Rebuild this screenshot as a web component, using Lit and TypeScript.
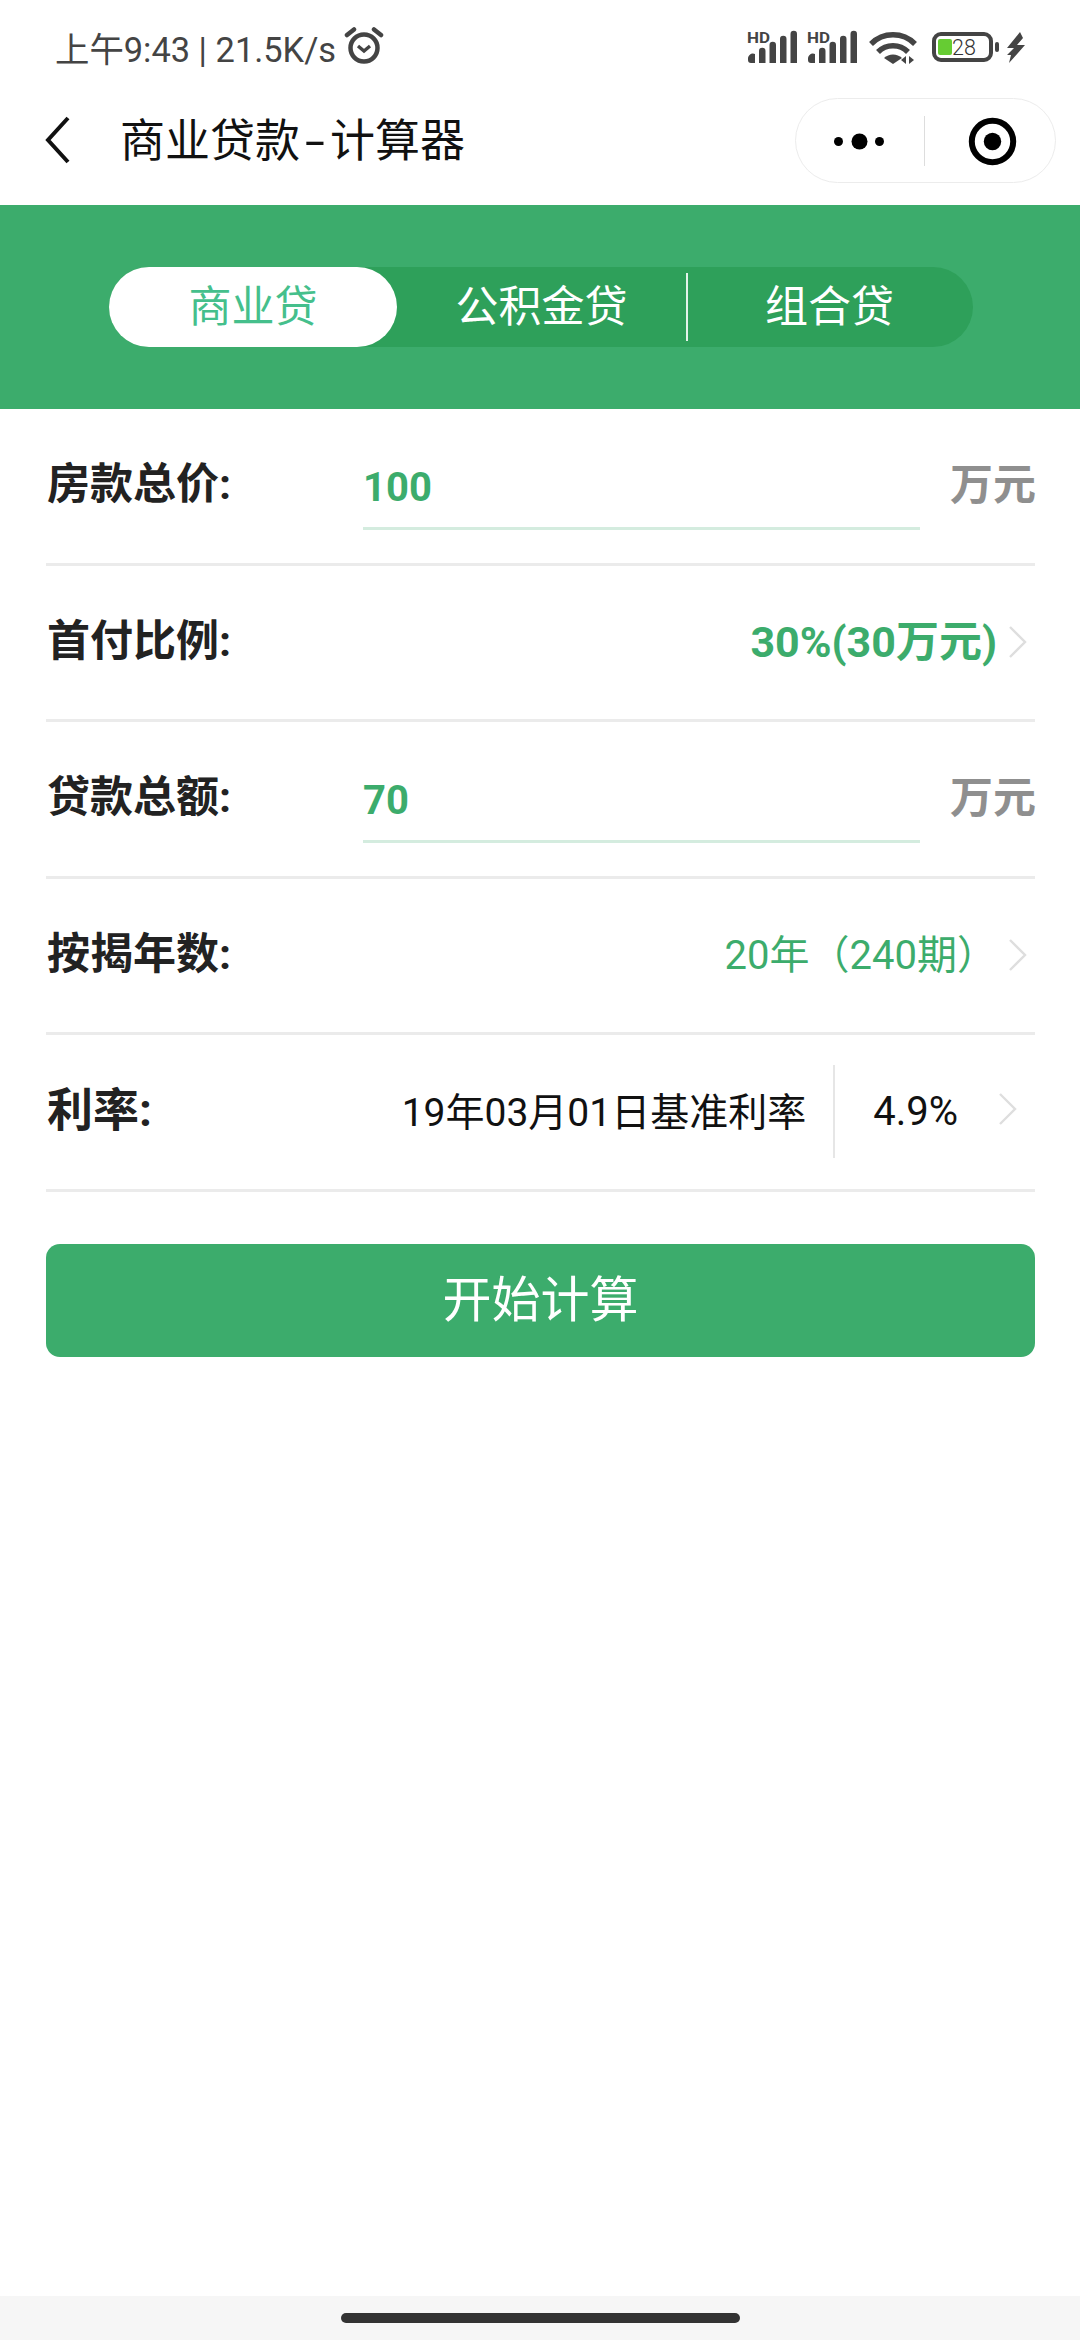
import { LitElement, html, css, svg } from "lit";
import { customElement } from "lit/decorators.js";

const chevron = html`<svg class="chev" width="20" height="34" viewBox="0 0 20 34"><path d="M2 2 L17 17 L2 32" fill="none" stroke="#dedede" stroke-width="2.4"/></svg>`;

const signal = svg`
  <text x="1" y="12.5" textLength="23" lengthAdjust="spacingAndGlyphs" font-family="Roboto, sans-serif" font-weight="700" font-size="15" fill="#444">HD</text>
  <path d="M2 29a5 5 0 0 1 7-5v9H5a3 3 0 0 1-3-3z M13 21a3 3 0 0 1 6.5 0v12h-6.5z M23.5 15a3 3 0 0 1 6.5 0v18h-6.5z M34 9a3 3 0 0 1 6.5 0v24h-6.5z M44.5 4a3 3 0 0 1 6.5 0v29h-6.5z" fill="#444"/>`;

@customElement("app-root")
export class AppRoot extends LitElement {
  static styles = css`
    :host {
      display: flex;
      flex-direction: column;
      width: 1080px;
      height: 2340px;
      background: #fff;
      font-family: "Roboto", "Noto Sans CJK SC", sans-serif;
      color: #222;
      overflow: hidden;
    }
    .status {
      height: 95px;
      display: flex;
      align-items: flex-start;
      justify-content: space-between;
      padding: 0 44px 0 55px;
      box-sizing: border-box;
      flex: none;
    }
    .st-left {
      display: flex;
      align-items: center;
      gap: 8px;
      height: 40px;
      margin-top: 27px;
      font-size: 34.4px;
      color: #444;
      white-space: nowrap;
    }
    .st-right {
      margin-top: 20px;
      height: 50px;
    }
    .st-right svg {
      display: block;
    }
    .nav {
      height: 110px;
      display: flex;
      align-items: flex-start;
      flex: none;
    }
    .back {
      margin: 20px 0 0 45px;
      flex: none;
    }
    .title {
      margin: 14px 0 0 49px;
      line-height: 66px;
      font-size: 45px;
      color: #111;
      white-space: nowrap;
      flex: 1;
    }
    .dash {
      display: inline-block;
      width: 30px;
      text-align: center;
      transform: scaleX(1.6);
    }
    .capsule {
      margin: 3px 24px 0 0;
      width: 261px;
      height: 85px;
      box-sizing: border-box;
      border: 1.5px solid #ececec;
      border-radius: 43px;
      flex: none;
      display: flex;
      align-items: center;
    }
    .banner {
      height: 204px;
      background: #3cac6c;
      display: flex;
      align-items: center;
      padding-left: 109px;
      flex: none;
      box-sizing: border-box;
    }
    .tabs {
      width: 864px;
      height: 80px;
      background: #2ea05a;
      border-radius: 40px;
      display: grid;
      grid-template-columns: 288px 289px 287px;
      align-items: center;
      color: #fff;
      font-size: 43px;
    }
    .tab {
      height: 100%;
      display: flex;
      align-items: center;
      justify-content: center;
      padding-bottom: 8px;
      box-sizing: border-box;
    }
    .tab.on {
      background: #fff;
      color: #45bf8c;
      border-radius: 40px;
    }
    .tab.sep {
      position: relative;
    }
    .tab.sep::after {
      content: "";
      position: absolute;
      right: -2px;
      top: 6px;
      bottom: 6px;
      width: 2px;
      background: #e3f3ea;
    }
    .form {
      margin: 0 45px 0 46px;
      flex: none;
    }
    .row {
      height: 156.5px;
      box-sizing: border-box;
      border-bottom: 3px solid #ebebeb;
      display: flex;
      align-items: center;
    }
    .label {
      width: 316px;
      margin-left: 1px;
      flex: none;
      font-size: 43px;
      font-weight: 700;
      color: #222;
      padding-bottom: 11px;
      white-space: nowrap;
    }
    .label.big {
      font-size: 46px;
      width: auto;
      padding-bottom: 11px;
    }
    .field {
      width: 557px;
      flex: none;
      height: 100%;
      box-sizing: border-box;
    }
    .field .v {
      font-size: 40px;
      font-weight: 700;
      color: #3cac6c;
      height: 121px;
      padding-top: 36px;
      line-height: 86px;
      box-sizing: border-box;
      border-bottom: 3px solid #d4ecdf;
    }
    .unit {
      flex: 1;
      text-align: right;
      font-size: 43px;
      font-weight: 700;
      color: #8f8f8f;
      padding-bottom: 10px;
      margin-right: -1px;
      white-space: nowrap;
    }
    .right {
      flex: 1;
      display: flex;
      justify-content: flex-end;
      align-items: center;
      color: #3cac6c;
      white-space: nowrap;
    }
    .pct {
      font-size: 43px;
      font-weight: 700;
      padding-bottom: 9px;
    }
    .term {
      font-size: 40px;
      padding-bottom: 7px;
    }
    .chev {
      margin: 0 7px 0 11px;
      flex: none;
    }
    .rate-date {
      font-size: 39px;
      color: #111;
      white-space: nowrap;
      padding-bottom: 5px;
    }
    .rate-sep {
      width: 2px;
      height: 93px;
      background: #e6e6e6;
      margin: 0 38px 0 27px;
      flex: none;
    }
    .rate-val {
      font-size: 40px;
      color: #111;
      white-space: nowrap;
    }
    .rate-chev {
      margin: 0 17px 6px 40px;
      flex: none;
    }
    .btn {
      margin: 52.5px 45px 0 46px;
      height: 113px;
      border-radius: 14px;
      background: #3cac6c;
      color: #fff;
      font-size: 49px;
      display: flex;
      align-items: center;
      justify-content: center;
      padding-bottom: 11px;
      box-sizing: border-box;
      flex: none;
    }
    .grow {
      flex: 1;
    }
    .home {
      height: 44px;
      background: #f6f6f6;
      flex: none;
      display: flex;
      justify-content: center;
      padding-top: 17px;
      box-sizing: border-box;
    }
    .home i {
      display: block;
      width: 399px;
      height: 10px;
      border-radius: 5px;
      background: #333;
    }
  `;

  row(label: string, value: string) {
    return html`<div class="row">
      <div class="label">${label}</div>
      <div class="field"><div class="v">${value}</div></div>
      <div class="unit">万元</div>
    </div>`;
  }

  render() {
    return html`
      <div class="status">
        <div class="st-left">
          <span>上午9:43 | 21.5K/s</span>
          <svg width="40" height="40" viewBox="0 0 40 40">
            <circle cx="20" cy="21" r="13.5" fill="none" stroke="#444" stroke-width="4.5"/>
            <path d="M14 19l6 5 6-5" fill="none" stroke="#444" stroke-width="3.4"/>
            <path d="M3 8 L10 2.5 M37 8 L30 2.5" stroke="#444" stroke-width="4.5" stroke-linecap="round"/>
          </svg>
        </div>
        <div class="st-right">
          <svg width="290" height="50" viewBox="0 -10 290 50">
            ${signal}
            <g transform="translate(60,0)">${signal}</g>
            <path d="M125 14a31 31 0 0 1 44 0" fill="none" stroke="#444" stroke-width="5.5"/>
            <path d="M132 22a21 21 0 0 1 30 0" fill="none" stroke="#444" stroke-width="5.5"/>
            <path d="M147 34 L138 28a13 13 0 0 1 18 0z" fill="#444"/>
            <path d="M160 26 v8 l-5 -4z M163 26 v8 l5 -4z" fill="#444"/>
            <rect x="188" y="4" width="57" height="26" rx="7" fill="none" stroke="#444" stroke-width="4"/>
            <rect x="192" y="9" width="14" height="16" rx="2" fill="#66cc33"/>
            <text x="218" y="25" text-anchor="middle" font-family="Roboto, sans-serif" font-weight="300" font-size="21.5" fill="#333">28</text>
            <rect x="249" y="12" width="4" height="10" rx="2" fill="#444"/>
            <path d="M274 2 L261 18 L268 18 L261 25 L265 25 L263 33 L279 15 L271 15 L277 8z" fill="#444"/>
          </svg>
        </div>
      </div>
      <div class="nav">
        <svg class="back" width="26" height="50" viewBox="0 0 26 50"><path d="M23 3 L3 25 L23 47" fill="none" stroke="#111" stroke-width="4"/></svg>
        <div class="title">商业贷款<span class="dash">-</span>计算器</div>
        <div class="capsule">
          <svg width="258" height="82" viewBox="0 0 258 82">
            <circle cx="42.5" cy="41.5" r="4.5" fill="#000"/>
            <circle cx="63.5" cy="41.5" r="8" fill="#000"/>
            <circle cx="83.5" cy="41.5" r="4.5" fill="#000"/>
            <rect x="128" y="16" width="1" height="50" fill="#ddd"/>
            <circle cx="196.5" cy="41.5" r="20.7" fill="none" stroke="#000" stroke-width="6"/>
            <circle cx="196.5" cy="41.5" r="8.7" fill="#000"/>
          </svg>
        </div>
      </div>
      <div class="banner">
        <div class="tabs">
          <div class="tab on">商业贷</div>
          <div class="tab sep">公积金贷</div>
          <div class="tab">组合贷</div>
        </div>
      </div>
      <div class="form">
        ${this.row("房款总价:", "100")}
        <div class="row">
          <div class="label">首付比例:</div>
          <div class="right"><span class="pct">30%(30万元)</span>${chevron}</div>
        </div>
        ${this.row("贷款总额:", "70")}
        <div class="row">
          <div class="label">按揭年数:</div>
          <div class="right"><span class="term">20年（240期）</span>${chevron}</div>
        </div>
        <div class="row">
          <div class="label big">利率:</div>
          <div class="right">
            <span class="rate-date">19年03月01日基准利率</span>
            <span class="rate-sep"></span>
            <span class="rate-val">4.9%</span>
            <svg class="rate-chev" width="20" height="34" viewBox="0 0 20 34"><path d="M2 2 L17 17 L2 32" fill="none" stroke="#dedede" stroke-width="2.4"/></svg>
          </div>
        </div>
      </div>
      <div class="btn">开始计算</div>
      <div class="grow"></div>
      <div class="home"><i></i></div>
    `;
  }
}
